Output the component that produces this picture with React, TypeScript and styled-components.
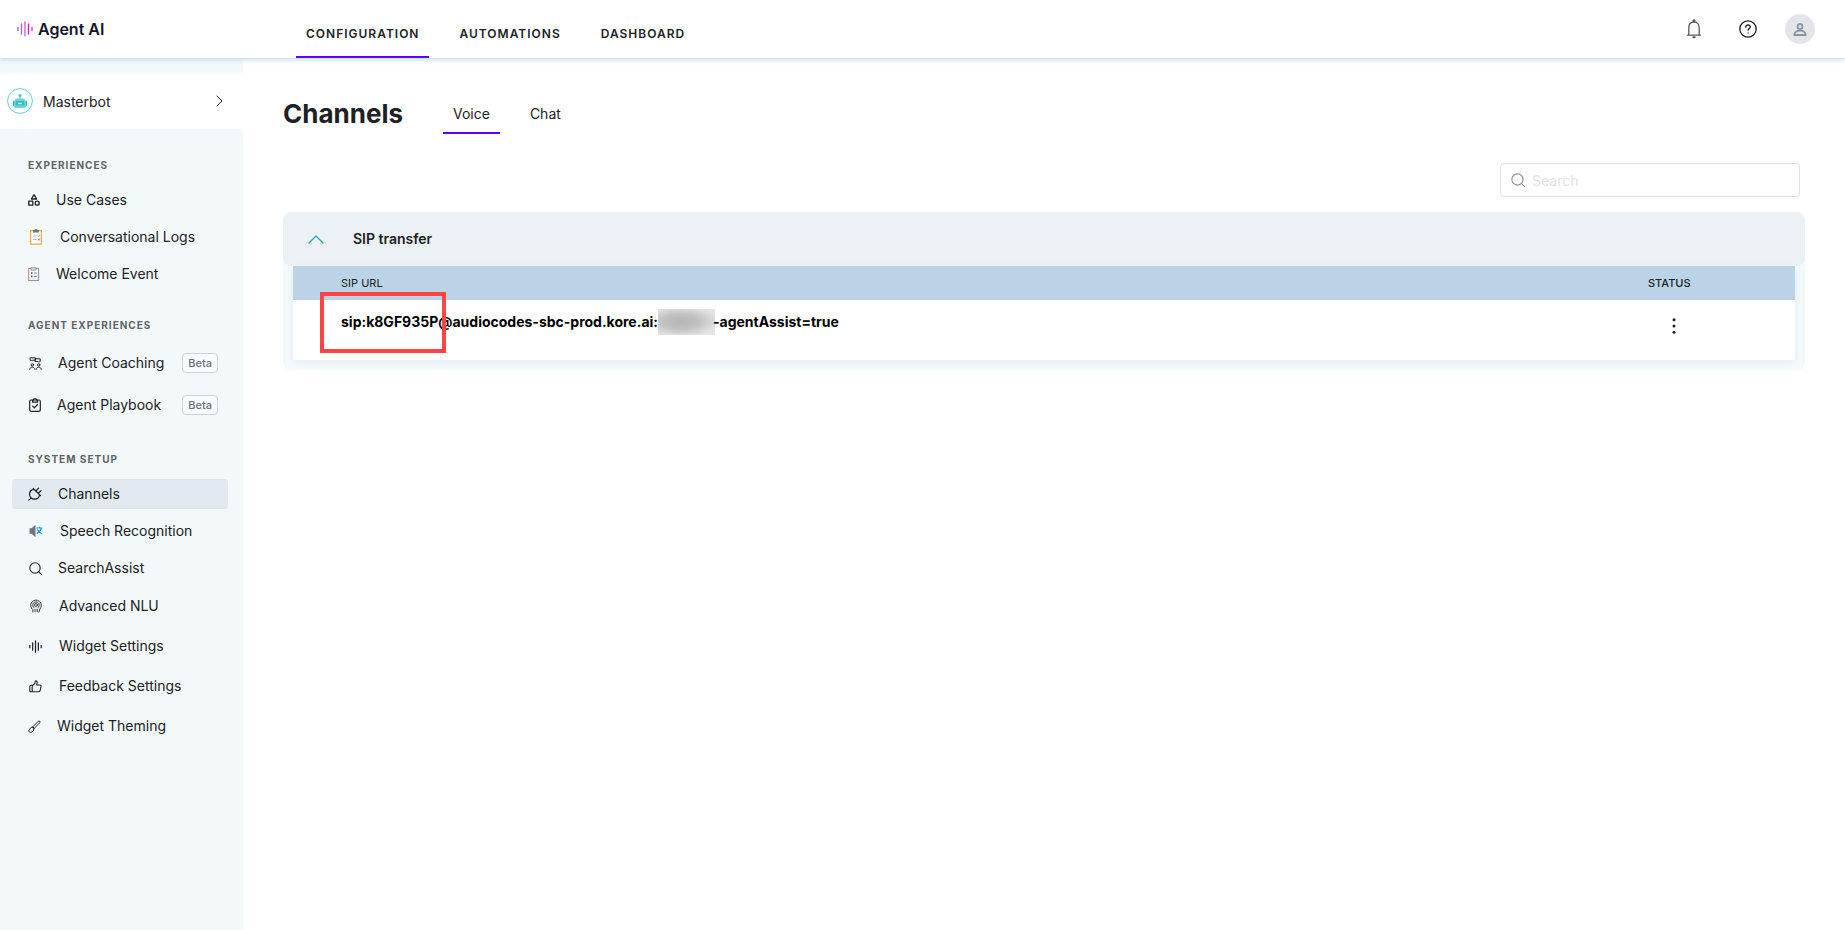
import React from "react";
import styled, { createGlobalStyle, css } from "styled-components";

const GlobalStyle = createGlobalStyle`
  *, *::before, *::after { box-sizing: border-box; }
  body { margin: 0; background: #fff; color: #202124; font-family: Inter, "Liberation Sans", sans-serif; font-size: 14px; line-height: 20px; }
  button, input { font: inherit; color: inherit; }
  h1, h2, ul { margin: 0; padding: 0; }
  svg { display: block; flex: none; }
`;

const Page = styled.div`
  display: flex;
  flex-direction: column;
  min-height: 100vh;
  padding-bottom: 2px;
`;

const Header = styled.header`
  display: flex;
  align-items: stretch;
  height: 58px;
  background: #fff;
  box-shadow: 0 1px 6px #b4d3e8;
  z-index: 1;
`;

const Brand = styled.a`
  display: flex;
  align-items: center;
  gap: 5px;
  width: 296px;
  padding-left: 17px;
  color: #14142b;
  font-size: 16px;
  font-weight: 600;
  text-decoration: none;
`;

const TabList = styled.nav`
  display: flex;
  gap: 20px;
`;

const tabBase = css<{ $active?: boolean }>`
  display: flex;
  align-items: center;
  padding: 0 10px;
  border-bottom: 2px solid ${(p) => (p.$active ? "#5a00ff" : "transparent")};
  color: #202124;
  text-decoration: none;
`;

const TopTab = styled.a<{ $active?: boolean }>`
  ${tabBase}
  padding-top: 12px;
  font-size: 12px;
  font-weight: 600;
  letter-spacing: 1px;
`;

const PageTab = styled.a<{ $active?: boolean }>`
  ${tabBase}
  height: 42px;
  padding-top: 4px;
`;

const HeaderActions = styled.div`
  display: flex;
  align-items: center;
  gap: 20px;
  margin-left: auto;
  padding-right: 30px;
`;

const IconButton = styled.button<{ $size: number; $fill?: string }>`
  display: flex;
  align-items: center;
  justify-content: center;
  width: ${(p) => p.$size}px;
  height: ${(p) => p.$size}px;
  padding: 0;
  border: 0;
  border-radius: 50%;
  background: ${(p) => p.$fill || "transparent"};
`;

const Body = styled.div`
  display: flex;
  flex: 1;
`;

const Sidebar = styled.aside`
  flex: none;
  width: 243px;
  padding-top: 15px;
  background: #f3f8fb;
`;

const BotSwitch = styled.button`
  display: flex;
  align-items: center;
  width: 100%;
  height: 56px;
  padding: 0 20px 0 7px;
  border: 0;
  background: #fff;
  text-align: left;
`;

const BotName = styled.span`
  flex: 1;
  padding: 2px 0 0 10px;
`;

const NavGroup = styled.section<{ $top: number }>`
  padding: ${(p) => p.$top}px 15px 0 12px;
`;

const GroupTitle = styled.h2`
  padding-left: 16px;
  color: #5f6368;
  font-size: 10px;
  line-height: 16px;
  font-weight: 700;
  letter-spacing: 1px;
`;

const NavList = styled.ul<{ $gap: number; $top: number }>`
  display: flex;
  flex-direction: column;
  gap: ${(p) => p.$gap}px;
  padding-top: ${(p) => p.$top}px;
  list-style: none;
`;

const NavLink = styled.a<{ $active?: boolean }>`
  display: flex;
  align-items: center;
  height: 30px;
  padding: 0 10px 0 16px;
  border: 1px solid ${(p) => (p.$active ? "#dbe5ea" : "transparent")};
  border-width: 1px 0;
  border-radius: 4px;
  background: ${(p) => (p.$active ? "#e2eaf0" : "transparent")};
  color: #202124;
  text-decoration: none;
`;

const NavIcon = styled.span<{ $width: number }>`
  display: flex;
  justify-content: center;
  width: ${(p) => p.$width}px;
  margin-right: 16px;
`;

const Beta = styled.span`
  margin-left: auto;
  padding: 0 5px;
  border: 1px solid #cbd3e0;
  border-radius: 4px;
  background: #fbfdfe;
  color: #667085;
  font-size: 11px;
  line-height: 18px;
  font-weight: 500;
`;

const Main = styled.main`
  flex: 1;
  min-width: 0;
  padding: 34px 40px;
`;

const TitleRow = styled.div`
  display: flex;
  align-items: center;
  gap: 40px;
`;

const Title = styled.h1`
  padding-top: 2px;
  font-size: 26px;
  line-height: 40px;
  font-weight: 700;
`;

const SearchBox = styled.label`
  display: flex;
  align-items: center;
  gap: 7px;
  width: 300px;
  height: 34px;
  margin: 29px 5px 15px auto;
  padding: 0 10px;
  border: 1px solid #dfe1e6;
  border-radius: 4px;
`;

const SearchInput = styled.input`
  flex: 1;
  min-width: 0;
  padding: 2px 0 0;
  border: 0;
  outline: 0;
  background: transparent;
  &::placeholder { color: #dfe1e6; opacity: 1; }
`;

const Panel = styled.section`
  padding-bottom: 10px;
  border-radius: 8px;
  background: #f3f8fb;
`;

const PanelHeader = styled.button`
  display: flex;
  align-items: center;
  gap: 29px;
  width: 100%;
  height: 54px;
  padding: 0 25px;
  border: 0;
  border-radius: 8px;
  background: #ebf1f5;
  font-weight: 600;
`;

const TableWrap = styled.div`
  padding: 0 10px;
`;

const Table = styled.table`
  width: 100%;
  border-collapse: collapse;
  background: #fff;
  box-shadow: 0 2px 8px #e4eff4;
`;

const Th = styled.th<{ $width?: number }>`
  width: ${(p) => (p.$width ? `${p.$width}px` : "auto")};
  height: 34px;
  padding: 0 0 0 ${(p) => (p.$width ? 0 : 48)}px;
  background: #bad3e6;
  font-size: 11px;
  font-weight: ${(p) => (p.$width ? 500 : 400)};
  text-align: left;
`;

const Td = styled.td<{ $left: number; $top: number }>`
  height: 60px;
  padding: ${(p) => p.$top}px 0 0 ${(p) => p.$left}px;
  color: #000;
  font-weight: 700;
  vertical-align: top;
`;

const Url = styled.span`
  position: relative;
  display: inline-flex;
  align-items: center;
`;

const Marker = styled.span`
  position: absolute;
  top: -20px;
  left: -21px;
  width: 126px;
  height: 61px;
  border: 4px solid #ff4444;
`;

const Redacted = styled.span`
  width: 57px;
  height: 26px;
  margin: -3px -2px -3px 0;
  background: radial-gradient(ellipse 38px 15px at 40% 48%, #b4b5b5, #c2c2c2 50%, #e4e4e4);
`;

const stroke = { fill: "none", stroke: "currentColor", strokeLinecap: "round", strokeLinejoin: "round" } as const;

const WaveIcon = ({ size, color }: { size: number; color: string }) => (
  <svg width={size} height={size} viewBox="0 0 16 16" fill="none" stroke={color} strokeWidth="1.5" strokeLinecap="round">
    <path d="M1 6.5v3M4.500 3.500v9M8 1v14M11.500 3.500v9M15 6.500v3" />
  </svg>
);

const LogoIcon = () => (
  <svg width="16" height="16" viewBox="0 0 16 16" fill="none" strokeWidth="1.3" strokeLinecap="round">
    <defs>
      <linearGradient id="bar" x1="0" y1="0" x2="0" y2="16" gradientUnits="userSpaceOnUse">
        <stop stopColor="#f43fd0" />
        <stop offset="1" stopColor="#8c7bff" />
      </linearGradient>
    </defs>
    <path d="M1 6.4v3.2" stroke="#8a5cf0" />
    <path d="M4.5 3v10" stroke="#a45cf0" />
    <path d="M8 1v14" stroke="url(#bar)" />
    <path d="M11.5 3v10" stroke="#e010c8" />
    <path d="M15 6.4v3.2" stroke="#f030c0" />
  </svg>
);

const BotIcon = () => (
  <svg width="26" height="26" viewBox="0 0 26 26">
    <circle cx="13" cy="13" r="12.4" fill="#fff" stroke="#5fd0cf" />
    <circle cx="13" cy="7.6" r="1.5" fill="#45c8c8" />
    <path d="M12.5 8h1v3h-1z" fill="#45c8c8" />
    <path d="M6 13h2v5H7a1 1 0 0 1-1-1zM18 13h2v4a1 1 0 0 1-1 1h-1z" fill="#22b8b8" />
    <path d="M9.5 10.5h7L19 13v5.500a1.500 1.500 0 0 1-1.500 1.500h-9A1.500 1.500 0 0 1 7 18.500V13z" fill="#6ad6d6" />
    <rect x="8.500" y="13" width="9" height="4.500" rx="1.500" fill="#30bfc3" />
    <path d="M11 15.500h4" stroke="#d8fafa" strokeWidth="1.400" />
  </svg>
);

const Chevron = () => (
  <svg width="7" height="12" viewBox="0 0 7 12" {...stroke}><path d="M1 1l5 5-5 5" /></svg>
);

const ShapesIcon = () => (
  <svg width="12" height="12" viewBox="0 0 12 12" {...stroke} strokeWidth="1.300">
    <path d="M6 .7L8.600 5H3.400zM.8 7.200h4v4h-4z" />
    <circle cx="9.200" cy="9.200" r="2" />
  </svg>
);

const LogsIcon = () => (
  <svg width="12" height="16" viewBox="0 0 12 16">
    <rect x=".6" y="1.600" width="10.800" height="13.600" fill="#fff" stroke="#f0ad4e" strokeWidth="1.300" />
    <path d="M3 1h1.500a1.500 1 0 0 1 3 0H9v2.500H3z" fill="#6b7885" />
    <path d="M3 7h3.500M3 10.500h3.500" stroke="#b6bec8" />
    <path d="M7.800 7l.8.8 1.400-1.800" fill="none" stroke="#62c7a2" />
    <path d="M8 9.600l1.800 1.800M9.800 9.600L8 11.400" stroke="#f0446a" />
  </svg>
);

const EventIcon = () => (
  <svg width="12" height="14" viewBox="0 0 12 14">
    <rect x=".6" y="1.400" width="10" height="12" fill="#f6f7f9" stroke="#8c8f98" />
    <path d="M.6 1.500v12" stroke="#d99a98" />
    <path d="M3 .7h5v2.400H3z" fill="#dde1e6" stroke="#7a7f88" strokeWidth=".7" />
    <path d="M3 6h1.500M3 9.500h1.500" stroke="#4c5160" strokeWidth="1.500" />
    <path d="M5.800 6h3M5.800 9.500h3" stroke="#8c93a0" />
  </svg>
);

const CoachIcon = () => (
  <svg width="13" height="13" viewBox="0 0 13 13" {...stroke} strokeWidth="1">
    <path d="M1.500 .8h5v2.400H3.200l-.8.8-.3-.8h-.6zM6.500 1.800h4.700v2.700h-.8l-.6.8-.8-.8H6.500z" />
    <circle cx="3.300" cy="7.900" r="1.200" />
    <circle cx="9.700" cy="7.900" r="1.200" />
    <path d="M.7 12.300c0-3 5.200-3 5.200 0M7.100 12.300c0-3 5.200-3 5.200 0" />
  </svg>
);

const PlaybookIcon = () => (
  <svg width="12" height="14" viewBox="0 0 12 14" {...stroke} strokeWidth="1.200">
    <rect x=".7" y="2" width="10.600" height="11.300" rx="1.200" />
    <path d="M3.500 2v2.200h5V2M4.500 2a1.500 1.300 0 0 1 3 0M3.600 8.200l1.700 1.700 3.300-3.400" />
  </svg>
);

const PlugIcon = () => (
  <svg width="14" height="14" viewBox="0 0 14 14" {...stroke} strokeWidth="1.200">
    <path d="M.8 13.200l1.900-1.900M5.300 1.500l7.200 7.200M6.200 2.400C3.600 2.600 1.600 4.400 1.500 7c-.1 3 2.300 5.300 5.100 5.200 2.600-.1 4.600-1.900 5-4.400M8 4l2.600-2.800M10.200 6.200L13 3.700" />
  </svg>
);

const SpeechIcon = () => (
  <svg width="14" height="14" viewBox="0 0 14 14">
    <path d="M.5 4.200h2L6.500.8v12.400l-4-3.400h-2z" fill="#6c7984" />
    <path d="M7.500 4h6M10.500 2.800V4M12.300 4c-.6 2.800-2.300 4.500-4.600 5.600M8.600 5.500c.8 2 2.300 3.500 4.600 4.300" fill="none" stroke="#1e9be0" strokeWidth="1.200" />
  </svg>
);

const SearchIcon = ({ size = 13, color = "currentColor" }: { size?: number; color?: string }) => (
  <svg width={size} height={size} viewBox="0 0 13 13" {...stroke} stroke={color} strokeWidth="1.100">
    <circle cx="6" cy="6" r="5.200" />
    <path d="M9.800 9.800l2.600 2.600" />
  </svg>
);

const MindIcon = () => (
  <svg width="12" height="14" viewBox="0 0 12 14" {...stroke} strokeWidth=".9">
    <path d="M2.800 13v-2.400A5.300 5.300 0 1 1 9.900 10L9 13M5 12.800v-2.600M7.200 12.800v-2.600M4 8.800A3.300 3.300 0 1 1 8 8.800" />
    <circle cx="6" cy="6" r="1.500" />
  </svg>
);

const ThumbIcon = () => (
  <svg width="13" height="13" viewBox="0 0 13 13" {...stroke} strokeWidth="1.100">
    <path d="M3.200 6l2.600-2.700.6-2.500c1.600-.1 2 1.200 1.700 2.300L7.600 5h3.300c.9 0 1.300.6 1.100 1.400l-.9 4.200c-.2.800-.7 1.200-1.400 1.200H2c-.8 0-1.200-.4-1.200-1.200V6.500c0-.8.400-1.200 1.200-1.200h1.200v6.500" />
  </svg>
);

const BrushIcon = () => (
  <svg width="13" height="13" viewBox="0 0 13 13" {...stroke} strokeWidth="1">
    <path d="M4.700 6.900L10.200 1.300c1.100-1 2.500.3 1.500 1.500L6.200 8.400zM4.700 6.900L6.200 8.400M4.400 7.300c-1.100-.3-2.100.4-2.300 1.400-.2 1-.7 1.500-1.400 1.700 0 1.200.9 1.900 2 1.900 1.900 0 3.500-1.600 3.100-3.500z" />
  </svg>
);

const BellIcon = () => (
  <svg width="16" height="20" viewBox="0 0 16 20" {...stroke} stroke="#55585c" strokeWidth="1.300">
    <path d="M1.500 16.200h13M2.800 16V9c0-3.500 2-6 5.200-6s5.200 2.500 5.200 6v7" />
    <circle cx="8" cy="1.700" r=".9" fill="#55585c" />
    <path d="M7.300 18.200h1.400" strokeWidth="2" />
  </svg>
);

const HelpIcon = () => (
  <svg width="18" height="18" viewBox="0 0 18 18" {...stroke} strokeWidth="1.300">
    <circle cx="9" cy="9" r="8.200" />
    <path d="M6.800 7.200c0-3 4.600-2.800 4.500-.1 0 1.500-2.200 1.600-2.200 3.100M9.100 12.800v.1" />
  </svg>
);

const UserIcon = () => (
  <svg width="14" height="13" viewBox="0 0 14 13" {...stroke} stroke="#8b96a3" strokeWidth="1.800">
    <circle cx="7" cy="3.500" r="2.500" />
    <path d="M1.300 12c0-6 11.400-6 11.400 0z" />
  </svg>
);

const MoreIcon = () => (
  <svg width="4" height="18" viewBox="0 0 4 18" fill="#202124">
    <circle cx="2" cy="2.700" r="1.500" /><circle cx="2" cy="9" r="1.500" /><circle cx="2" cy="15.300" r="1.500" />
  </svg>
);

type Item = { label: string; icon: React.ReactNode; width: number; beta?: boolean; active?: boolean };
type Group = { title: string; top: number; listTop: number; gap: number; items: Item[] };

const groups: Group[] = [
  {
    title: "EXPERIENCES", top: 28, listTop: 12, gap: 7,
    items: [
      { label: "Use Cases", icon: <ShapesIcon />, width: 12 },
      { label: "Conversational Logs", icon: <LogsIcon />, width: 16 },
      { label: "Welcome Event", icon: <EventIcon />, width: 12 },
    ],
  },
  {
    title: "AGENT EXPERIENCES", top: 28, listTop: 15, gap: 12,
    items: [
      { label: "Agent Coaching", icon: <CoachIcon />, width: 14, beta: true },
      { label: "Agent Playbook", icon: <PlaybookIcon />, width: 13, beta: true },
    ],
  },
  {
    title: "SYSTEM SETUP", top: 31, listTop: 12, gap: 7,
    items: [
      { label: "Channels", icon: <PlugIcon />, width: 14, active: true },
      { label: "Speech Recognition", icon: <SpeechIcon />, width: 16 },
      { label: "SearchAssist", icon: <SearchIcon />, width: 14 },
    ],
  },
];

const tools: Item[] = [
  { label: "Advanced NLU", icon: <MindIcon />, width: 15 },
  { label: "Widget Settings", icon: <WaveIcon size={13} color="#202124" />, width: 15 },
  { label: "Feedback Settings", icon: <ThumbIcon />, width: 15 },
  { label: "Widget Theming", icon: <BrushIcon />, width: 13 },
];

const NavItems = ({ items, gap, top }: { items: Item[]; gap: number; top: number }) => (
  <NavList $gap={gap} $top={top}>
    {items.map((item) => (
      <li key={item.label}>
        <NavLink href="#" $active={item.active} aria-current={item.active ? "page" : undefined}>
          <NavIcon $width={item.width}>{item.icon}</NavIcon>
          {item.label}
          {item.beta && <Beta>Beta</Beta>}
        </NavLink>
      </li>
    ))}
  </NavList>
);

export default function App() {
  return (
    <Page>
      <GlobalStyle />
      <Header>
        <Brand href="#"><LogoIcon />Agent AI</Brand>
        <TabList>
          <TopTab href="#" $active>CONFIGURATION</TopTab>
          <TopTab href="#">AUTOMATIONS</TopTab>
          <TopTab href="#">DASHBOARD</TopTab>
        </TabList>
        <HeaderActions>
          <IconButton $size={34} aria-label="Notifications"><BellIcon /></IconButton>
          <IconButton $size={34} aria-label="Help"><HelpIcon /></IconButton>
          <IconButton $size={30} $fill="#e4e5eb" aria-label="Account"><UserIcon /></IconButton>
        </HeaderActions>
      </Header>
      <Body>
        <Sidebar>
          <BotSwitch><BotIcon /><BotName>Masterbot</BotName><Chevron /></BotSwitch>
          {groups.map((g) => (
            <NavGroup key={g.title} $top={g.top}>
              <GroupTitle>{g.title}</GroupTitle>
              <NavItems items={g.items} gap={g.gap} top={g.listTop} />
              {g.title === "SYSTEM SETUP" && <NavItems items={tools} gap={10} top={8} />}
            </NavGroup>
          ))}
        </Sidebar>
        <Main>
          <TitleRow>
            <Title>Channels</Title>
            <TabList>
              <PageTab href="#" $active>Voice</PageTab>
              <PageTab href="#">Chat</PageTab>
            </TabList>
          </TitleRow>
          <SearchBox>
            <SearchIcon size={14} color="#8d8fa6" />
            <SearchInput type="search" placeholder="Search" aria-label="Search" />
          </SearchBox>
          <Panel>
            <PanelHeader aria-expanded="true">
              <svg width="16" height="9" viewBox="0 0 16 9" {...stroke} stroke="#1fa9b0" strokeWidth="1.200"><path d="M1 8l7-7 7 7" /></svg>
              SIP transfer
            </PanelHeader>
            <TableWrap>
              <Table>
                <thead>
                  <tr><Th>SIP URL</Th><Th $width={147}>STATUS</Th></tr>
                </thead>
                <tbody>
                  <tr>
                    <Td $left={48} $top={12}>
                      <Url>
                        sip:k8GF935P@audiocodes-sbc-prod.kore.ai:<Redacted />-agentAssist=true
                        <Marker />
                      </Url>
                    </Td>
                    <Td $left={14} $top={14}>
                      <IconButton $size={24} aria-label="More options"><MoreIcon /></IconButton>
                    </Td>
                  </tr>
                </tbody>
              </Table>
            </TableWrap>
          </Panel>
        </Main>
      </Body>
    </Page>
  );
}
